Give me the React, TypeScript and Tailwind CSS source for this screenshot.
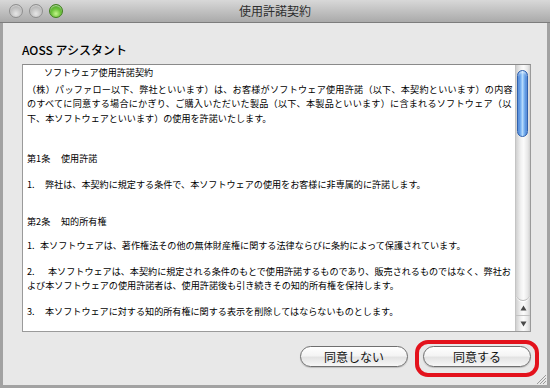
import React from "react";

const Light = ({ green }: { green?: boolean }) => (
  <div
    className={
      green
        ? "w-[14px] h-[14px] rounded-full border border-[#3f7f1c] bg-[radial-gradient(circle_at_50%_72%,#c4f58a_0%,#6cc23a_45%,#3e8f1c_100%)] shadow-[inset_0_1px_1px_rgba(255,255,255,0.6)]"
        : "w-[14px] h-[14px] rounded-full border border-[#8e8e8e] bg-[radial-gradient(circle_at_50%_72%,#e6e6e6_0%,#c2c2c2_50%,#9e9e9e_100%)] shadow-[inset_0_1px_1px_rgba(255,255,255,0.5)]"
    }
  />
);

const AquaButton = ({ label }: { label: string }) => (
  <div className="h-[21px] rounded-full border border-[#6f6f6f] bg-[linear-gradient(to_bottom,#ffffff_0%,#f4f4f4_45%,#e3e3e3_55%,#f7f7f7_100%)] shadow-[0_1px_1px_rgba(0,0,0,0.18)] flex items-center justify-center text-[12px] leading-none text-[#111]">
    {label}
  </div>
);

export default function App() {
  return (
    <div className="w-[550px] h-[388px] flex flex-col bg-[#e8e8e8] font-['Noto_Sans_CJK_JP',sans-serif] overflow-hidden">
      {/* title bar */}
      <div className="relative h-[23px] shrink-0 flex items-center pl-[9px] gap-[6px] bg-[linear-gradient(to_bottom,#d8d8d8,#aaaaaa)] border-b border-[#7d7d7d]">
        <Light />
        <Light />
        <Light green />
        <div className="absolute inset-0 flex items-center justify-center text-[12px] text-[#2e2e2e] leading-none pointer-events-none">
          使用許諾契約
        </div>
      </div>

      {/* body */}
      <div className="relative flex-1 flex flex-col border-l-[3px] border-r-[3px] border-b-[3px] border-[#a2a2a2] pl-[19px] pr-[16px] pt-[19px]">
        <div className="h-[16px] text-[12px] leading-[16px] font-medium text-[#000]">AOSS アシスタント</div>

        <div className="mt-[6px] h-[268px] flex bg-white border border-[#9a9a9a] border-t-[#8a8a8a]">
          <div className="flex-1 overflow-hidden pl-[4px] text-[9.1px] leading-[14.5px] text-[#000] whitespace-nowrap">
            <div className="pl-[17px]">ソフトウェア使用許諾契約</div>
            <div className="mt-[2px]">
              <div className="tracking-[0.25px]">（株）パッファロー以下、弊社といいます）は、お客様がソフトウェア使用許諾（以下、本契約といいます）の内容</div>
              <div className="tracking-[0.25px]">のすべてに同意する場合にかぎり、ご購入いただいた製品（以下、本製品といいます）に含まれるソフトウェア（以</div>
              <div>下、本ソフトウェアといいます）の使用を許諾いたします。</div>
            </div>
            <div className="mt-[25.5px]">
              <span className="inline-block w-[34px]">第1条</span>使用許諾
            </div>
            <div className="mt-[11.5px]">
              <span className="inline-block w-[18px]">1.</span>弊社は、本契約に規定する条件で、本ソフトウェアの使用をお客様に非専属的に許諾します。
            </div>
            <div className="mt-[22.5px]">
              <span className="inline-block w-[34px]">第2条</span>知的所有権
            </div>
            <div className="mt-[9.5px]">
              <span className="inline-block w-[13px]">1.</span>本ソフトウェアは、著作権法その他の無体財産権に関する法律ならびに条約によって保護されています。
            </div>
            <div className="mt-[11.5px]">
              <div>
                <span className="inline-block w-[21px]">2.</span>本ソフトウェアは、本契約に規定される条件のもとで使用許諾するものであり、販売されるものではなく、弊社お
              </div>
              <div>よび本ソフトウェアの使用許諾者は、使用許諾後も引き続きその知的所有権を保持します。</div>
            </div>
            <div className="mt-[11px]">
              <span className="inline-block w-[18px]">3.</span>本ソフトウェアに対する知的所有権に関する表示を削除してはならないものとします。
            </div>
          </div>

          {/* scrollbar */}
          <div className="w-[15px] flex flex-col border-l border-[#c4c4c4] bg-[linear-gradient(to_right,#d0d0d0,#f2f2f2_35%,#fbfbfb_55%,#e6e6e6_85%,#cfcfcf)]">
            <div className="flex-1 pt-[5px] pl-[1px] pr-[2px] rounded-b-[7px] border-b border-[#b8b8b8] shadow-[0_1px_0_#ffffff]">
              <div className="h-[67px] rounded-full border border-[#2f62ae] bg-[linear-gradient(to_right,#3a76cf,#79b2f2_30%,#b5dafc_50%,#74aeef_72%,#3a74cc)] shadow-[inset_0_2px_2px_rgba(255,255,255,0.5)]" />
            </div>
            <div className="h-[15px] flex items-center justify-center border-b border-[#c2c2c2]">
              <svg width="7" height="6" viewBox="0 0 7 6">
                <polygon points="3.5,0.5 6.5,5.5 0.5,5.5" fill="#4a4a4a" />
              </svg>
            </div>
            <div className="h-[15px] flex items-center justify-center">
              <svg width="7" height="6" viewBox="0 0 7 6">
                <polygon points="0.5,0.5 6.5,0.5 3.5,5.5" fill="#4a4a4a" />
              </svg>
            </div>
          </div>
        </div>

        {/* buttons */}
        <div className="mt-[8px] mr-[-8px] flex justify-end items-start">
          <div className="w-[108px] mt-[6px] mr-[7px]">
            <AquaButton label="同意しない" />
          </div>
          <div className="w-[124px] h-[37px] rounded-[13px] border-[4px] border-[#e3121c] pt-[2px] px-[4px]">
            <AquaButton label="同意する" />
          </div>
        </div>

        {/* resize grip */}
        <svg className="absolute right-[1px] bottom-[1px]" width="10" height="10" viewBox="0 0 10 10">
          <line x1="1" y1="10" x2="10" y2="1" stroke="#9a9a9a" strokeWidth="1" />
          <line x1="4" y1="10" x2="10" y2="4" stroke="#9a9a9a" strokeWidth="1" />
          <line x1="7" y1="10" x2="10" y2="7" stroke="#9a9a9a" strokeWidth="1" />
        </svg>
      </div>
    </div>
  );
}
